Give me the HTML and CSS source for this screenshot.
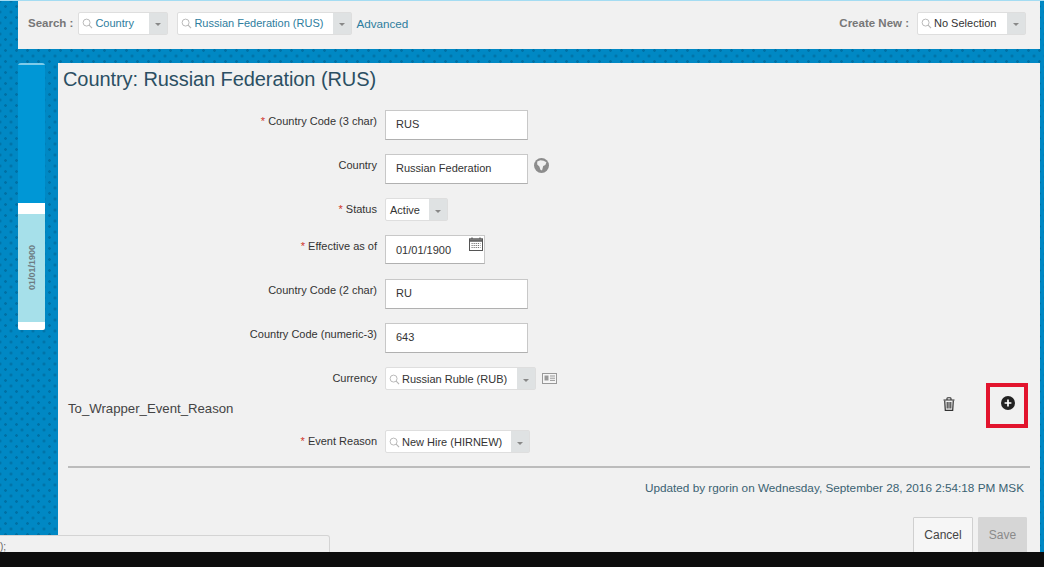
FILE: index.html
```
<!DOCTYPE html>
<html lang="en">
<head>
<meta charset="utf-8">
<title>Country: Russian Federation (RUS)</title>
<link rel="stylesheet" href="styles.css">
</head>
<body>
<svg class="defs" width="0" height="0" aria-hidden="true">
  <symbol id="mag" viewBox="0 0 12 12"><circle cx="5" cy="5" r="3.8" fill="none" stroke="#b4b4b4" stroke-width="1"/><path d="M7.8 7.8 11 11" stroke="#b4b4b4" stroke-width="1.2" fill="none"/></symbol>
</svg>
<div class="stage">
  <header class="topbar">
    <div class="topgroup">
      <span class="toplabel first">Search :</span>
      <div class="combo w90"><svg class="mag"><use href="#mag"/></svg><span class="val link">Country</span><span class="drop"><i></i></span></div>
      <div class="combo w175 gap9"><svg class="mag"><use href="#mag"/></svg><span class="val link">Russian Federation (RUS)</span><span class="drop narrow"><i></i></span></div>
      <a class="advanced">Advanced</a>
    </div>
    <div class="topgroup">
      <span class="toplabel">Create New :</span>
      <div class="combo w109"><svg class="mag"><use href="#mag"/></svg><span class="val">No Selection</span><span class="drop"><i></i></span></div>
    </div>
  </header>
  <div class="workspace">
    <aside class="timeline">
      <div class="tl-blue"></div>
      <div class="tl-white"></div>
      <div class="tl-date"><span>01/01/1900</span></div>
      <div class="tl-end"></div>
    </aside>
    <main class="panel">
      <h1 class="title">Country: Russian Federation (RUS)</h1>
      <form class="form">
        <div class="row"><label class="lbl"><b>*</b> Country Code (3 char)</label><div class="input">RUS</div></div>
        <div class="row"><label class="lbl">Country</label><div class="input">Russian Federation</div>
          <svg class="globe" viewBox="0 0 14 14"><circle cx="7" cy="7" r="7" fill="#8c8c8c"/><path d="M3 3.2 6 2.2 9 2.5 11.6 4 10.6 6.5 8.6 7.5 7.5 11.6 6 11 5 8 3 6Z" fill="#f0f0f0"/></svg>
        </div>
        <div class="row"><label class="lbl"><b>*</b> Status</label><div class="combo w63"><span class="val plain">Active</span><span class="drop"><i></i></span></div></div>
        <div class="row date-row"><label class="lbl"><b>*</b> Effective as of</label><div class="input date">01/01/1900
          <svg class="cal" viewBox="0 0 14 14"><path d="M3 .5v2.5M11 .5v2.5" stroke="#444" stroke-width="1.2"/><rect x=".5" y="1.8" width="13" height="11.7" fill="#fff" stroke="#555"/><rect x="1" y="2.2" width="12" height="2.6" fill="#666"/><path d="M2.5 6.5h9M2.5 8.5h9M2.5 10.5h9" stroke="#777" stroke-dasharray="1.2 .9"/></svg></div></div>
        <div class="row"><label class="lbl">Country Code (2 char)</label><div class="input">RU</div></div>
        <div class="row"><label class="lbl">Country Code (numeric-3)</label><div class="input">643</div></div>
        <div class="row"><label class="lbl">Currency</label><div class="combo w151"><svg class="mag"><use href="#mag"/></svg><span class="val">Russian Ruble (RUB)</span><span class="drop"><i></i></span></div>
          <svg class="card" viewBox="0 0 15 11"><rect x=".5" y=".5" width="14" height="10" fill="#f6f6f6" stroke="#999"/><rect x="2.5" y="2.5" width="4" height="5" fill="#999"/><path d="M8 3h5M8 5.2h5M8 7.4h5" stroke="#999"/></svg>
        </div>
        <div class="wrapper-row">
          <span class="wrapper-name">To_Wrapper_Event_Reason</span>
          <svg class="trash" viewBox="0 0 12 14"><path d="M.5 3h11M4 3V1.6C4 1 4.4.7 5 .7h2c.6 0 1 .3 1 .9V3" fill="none" stroke="#333" stroke-width="1.1"/><path d="M1.7 3.5 2.3 13.3h7.4l.6-9.8" fill="none" stroke="#333" stroke-width="1.2"/><path d="M4.2 5v6.5M6 5v6.5M7.8 5v6.5" stroke="#333" stroke-width="1.1"/></svg>
          <div class="addbox"><svg class="plus" viewBox="0 0 14 14"><circle cx="7" cy="7" r="7" fill="#222"/><path d="M7 3.6v6.8M3.6 7h6.8" stroke="#fff" stroke-width="1.7"/></svg></div>
        </div>
        <div class="row event"><label class="lbl"><b>*</b> Event Reason</label><div class="combo w145"><svg class="mag"><use href="#mag"/></svg><span class="val">New Hire (HIRNEW)</span><span class="drop"><i></i></span></div></div>
      </form>
      <hr class="rule">
      <p class="updated">Updated by rgorin on Wednesday, September 28, 2016 2:54:18 PM MSK</p>
      <div class="actions"><button type="button" class="btn cancel">Cancel</button><button type="button" class="btn save">Save</button></div>
    </main>
  </div>
  <div class="hint">);</div>
</div>
<div class="blackbar"></div>
</body>
</html>
```
FILE: styles.css
```
* { box-sizing: border-box; }
html, body { margin: 0; padding: 0; }
body { width: 1044px; height: 567px; overflow: hidden; background: #0d0d0d; font-family: "Liberation Sans", Arial, sans-serif; font-size: 12px; color: #333; }
.defs { position: absolute; }
.stage {
  position: relative; height: 552px; overflow: hidden; padding: 0 4px 0 18px;
  border-top: 1px solid #a4dcf2;
  background-color: #0088c4;
  background-image: radial-gradient(circle, #0070a4 0 1px, transparent 1.6px), radial-gradient(circle, #0070a4 0 1px, transparent 1.6px);
  background-size: 11px 11px;
  background-position: 0 0, 5.5px 5.5px;
}
.topbar { height: 48px; background: #f1f1f1; display: flex; justify-content: space-between; align-items: center; padding: 0 14px 4px 10px; }
.topgroup { display: flex; align-items: center; }
.toplabel { font-weight: bold; color: #777; font-size: 11.5px; margin-right: 8px; }
.toplabel.first { margin-right: 5px; }
.combo { display: flex; align-items: center; height: 23px; background: #fff; border: 1px solid #dedede; border-radius: 2px; }
.w90 { width: 90px; } .w175 { width: 175px; } .w109 { width: 109px; } .w63 { width: 63px; } .w151 { width: 151px; } .w145 { width: 145px; }
.gap9 { margin-left: 9px; }
.mag { width: 11px; height: 11px; margin: 1px 2px 0 3px; flex: none; }
.val { flex: 1; font-size: 11px; white-space: nowrap; color: #333; }
.val.link { color: #2e7d9e; }
.val.plain { padding-left: 4px; }
.drop { flex: none; width: 18px; align-self: stretch; background: #dfe2e3; display: flex; align-items: center; justify-content: center; }
.drop.narrow { width: 18px; }
.drop i { display: block; width: 0; height: 0; margin-top: 3px; border: 3.5px solid transparent; border-top-color: #888; border-bottom: 0; }
.advanced { color: #2e7d9e; font-size: 11.7px; margin-left: 4px; }
.workspace { display: flex; margin-top: 14px; height: 489px; }
.timeline { width: 27px; height: 267px; flex: none; margin-right: 13px; display: flex; flex-direction: column; border-radius: 3px 3px 2px 2px; overflow: hidden; }
.tl-blue { height: 140px; background: #0097d6; border-top: 2px solid #7fcbe9; }
.tl-white { height: 11px; background: #fff; }
.tl-date { height: 108px; background: #a6e0ea; display: flex; align-items: center; justify-content: center; }
.tl-date span { writing-mode: vertical-rl; transform: rotate(180deg); font-size: 9px; font-weight: bold; color: #6d7c82; }
.tl-end { height: 8px; background: #fff; }
.panel { flex: 1; min-width: 0; background: #f1f1f1; padding: 4px 10px 0 5px; display: flex; flex-direction: column; }
.title { margin: 0; font-weight: normal; font-size: 20px; line-height: 24px; color: #2b4f63; letter-spacing: -.08px; }
.form { display: flex; flex-direction: column; gap: 14px; margin-top: 19px; }
.row { display: flex; align-items: flex-start; }
.lbl { width: 314px; margin-right: 8px; flex: none; text-align: right; line-height: 14px; padding-top: 4px; font-size: 11px; color: #333; }
.lbl b { color: #d0342c; font-weight: normal; }
.input { position: relative; width: 143px; height: 30px; background: #fff; border: 1px solid #c8c8c8; border-bottom-color: #b0b0b0; padding-left: 10px; font-size: 11px; line-height: 27px; color: #333; }
.input.date { width: 100px; height: 29px; line-height: 28px; }
.date-row { height: 30px; }
.globe { width: 15px; height: 15px; margin: 4px 0 0 6px; }
.cal { position: absolute; right: 1px; top: 1px; width: 14px; height: 14px; }
.card { width: 15px; height: 11px; margin: 6px 0 0 6px; }
.wrapper-row { display: flex; align-items: center; height: 45px; margin: -21px 0 -12px 0; padding-left: 5px; position: relative; z-index: 1; pointer-events: none; }
.wrapper-name { font-size: 13.2px; color: #444; margin-top: 5px; flex: 1; }
.trash { width: 12px; height: 14px; margin: -3px 0 0 0; flex: none; }
.addbox { width: 42px; height: 45px; margin: 0 2px 0 31px; border: 4px solid #e2142d; display: flex; align-items: center; justify-content: center; }
.plus { width: 14px; height: 14px; margin: -5px 0 0 2px; }
.rule { margin: 13px 0 0 5px; width: 962px; height: 2px; border: 0; background: #bcbcbc; flex: none; }
.updated { margin: 13px 6px 0 0; text-align: right; color: #3a6272; font-size: 11.75px; line-height: 14px; }
.actions { display: flex; justify-content: flex-end; gap: 5px; margin: 22px 3px 0 0; }
.btn { height: 40px; font: 12px "Liberation Sans", Arial, sans-serif; border-radius: 1px; padding: 0 0 4px; }
.cancel { width: 60px; background: #f6f6f6; border: 1px solid #d0d0d0; color: #444; }
.save { width: 49px; background: #d6d6d6; border: 1px solid #d6d6d6; color: #8a8a8a; }
.hint { position: absolute; left: 0; top: 534px; width: 330px; height: 24px; background: #f1f1f1; border: 1px solid #d4d4d4; border-left: 0; border-radius: 0 3px 0 0; padding-top: 5px; font-size: 10px; color: #666; line-height: 12px; }
.blackbar { height: 15px; background: #0d0d0d; }
```
